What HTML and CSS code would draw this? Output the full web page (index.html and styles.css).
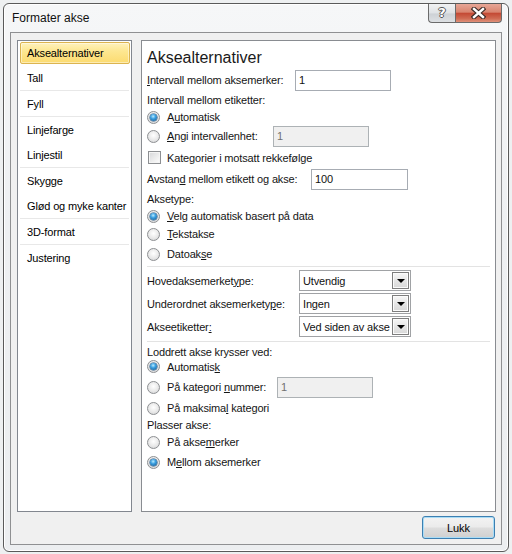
FILE: index.html
```html
<!DOCTYPE html>
<html lang="no">
<head>
<meta charset="utf-8">
<title>Formater akse</title>
<link rel="stylesheet" href="styles.css">
</head>
<body>
<div class="window">
  <div class="titlebar">
    <span class="title">Formater akse</span>
    <div class="caption-btns">
      <div class="cbtn help"><span>?</span></div>
      <div class="cbtn close">
        <svg width="15" height="12" viewBox="0 0 15 12"><path d="M3 2 L12 10 M12 2 L3 10" stroke="#3b2a26" stroke-width="4.6" stroke-linecap="square"/><path d="M3 2 L12 10 M12 2 L3 10" stroke="#ffffff" stroke-width="2.4" stroke-linecap="square"/></svg>
      </div>
    </div>
  </div>
  <div class="client">
    <div class="panes">
      <div class="nav">
        <div class="item first"><span class="sel">Aksealternativer</span></div>
        <div class="item">Tall</div>
        <div class="sep"></div>
        <div class="item">Fyll</div>
        <div class="sep"></div>
        <div class="item">Linjefarge</div>
        <div class="item">Linjestil</div>
        <div class="sep"></div>
        <div class="item">Skygge</div>
        <div class="item">Glød og myke kanter</div>
        <div class="sep"></div>
        <div class="item">3D-format</div>
        <div class="sep"></div>
        <div class="item">Justering</div>
      </div>
      <div class="content">
        <div class="heading">Aksealternativer</div>
        <div class="row r22"><span class="lbl w148"><u>I</u>ntervall mellom aksemerker:</span><span class="tb w96">1</span></div>
        <div class="row r18"><span>Intervall mellom etiketter:</span></div>
        <div class="row r16"><span class="radio on"></span><span>A<u>u</u>tomatisk</span></div>
        <div class="row r22"><span class="radio"></span><span class="lbl w106"><u>A</u>ngi intervallenhet:</span><span class="tb w96 dis">1</span></div>
        <div class="row r21"><span class="check"></span><span>Kategorier i motsatt rekkefølge</span></div>
        <div class="row r22"><span class="lbl w164">Avstan<u>d</u> mellom etikett og akse:</span><span class="tb w97">100</span></div>
        <div class="row r18"><span>Aksetype:</span></div>
        <div class="row r16"><span class="radio on"></span><span><u>V</u>elg automatisk basert på data</span></div>
        <div class="row r20"><span class="radio"></span><span><u>T</u>ekstakse</span></div>
        <div class="row r20"><span class="radio"></span><span>Datoak<u>s</u>e</span></div>
        <div class="hsep s1"></div>
        <div class="combos">
          <span>Hovedaksemerket<u>y</u>pe:</span>
          <span class="combo"><span class="val">Utvendig</span><span class="dd"></span></span>
          <span>Underordnet aksemerkety<u>p</u>e:</span>
          <span class="combo"><span class="val">Ingen</span><span class="dd"></span></span>
          <span>Akseetiketter<u>:</u></span>
          <span class="combo"><span class="val">Ved siden av akse</span><span class="dd"></span></span>
        </div>
        <div class="hsep s2"></div>
        <div class="row r15"><span>Loddrett akse krysser ved:</span></div>
        <div class="row r15"><span class="radio on"></span><span>Automatis<u>k</u></span></div>
        <div class="row r26"><span class="radio"></span><span class="lbl w110">På kategori <u>n</u>ummer:</span><span class="tb w96 dis">1</span></div>
        <div class="row r16"><span class="radio"></span><span>På maksima<u>l</u> kategori</span></div>
        <div class="row r18"><span>Plasser akse:</span></div>
        <div class="row r16"><span class="radio"></span><span>På akse<u>m</u>erker</span></div>
        <div class="row r24"><span class="radio on"></span><span>M<u>e</u>llom aksemerker</span></div>
      </div>
    </div>
    <div class="footer"><button class="btn">Lukk</button></div>
  </div>
</div>
</body>
</html>
```

FILE: styles.css
```css
html, body {
  margin: 0;
  padding: 0;
}
body {
  width: 512px;
  height: 554px;
  overflow: hidden;
  background: #eef0f1;
  font-family: "Liberation Sans", Arial, sans-serif;
  font-size: 11px;
  letter-spacing: -0.15px;
  color: #151515;
}
.window {
  box-sizing: border-box;
  margin: 3px 3px 0 3px;
  width: 506px;
  height: 549px;
  border: 1px solid #5a5a5a;
  border-radius: 6px;
  background: linear-gradient(to bottom, #f6f7f8 0%, #eef0f2 40%, #eceef0 100%);
  box-shadow: inset 0 0 0 1px #ffffff;
  padding: 0 6px 6px 6px;
  display: flex;
  flex-direction: column;
}
.titlebar {
  height: 28px;
  display: flex;
  justify-content: space-between;
  align-items: flex-start;
  flex: none;
}
.title {
  font-size: 12px;
  letter-spacing: 0;
  color: #111;
  padding-top: 7px;
  padding-left: 2px;
}
.caption-btns {
  display: flex;
}
.cbtn {
  box-sizing: border-box;
  height: 19px;
  border: 1px solid #6b6b6b;
  border-top: none;
  display: flex;
  align-items: center;
  justify-content: center;
}
.help {
  width: 27px;
  border-radius: 0 0 0 4px;
  border-right: none;
  background: linear-gradient(to bottom, #f1f2f3 0%, #dfe2e5 50%, #cdd1d5 55%, #dde0e3 100%);
}
.help span {
  font-family: "DejaVu Sans", sans-serif;
  font-weight: bold;
  font-size: 13px;
  color: #ffffff;
  text-shadow: 1px 0 0 #555, -1px 0 0 #555, 0 1px 0 #555, 0 -1px 0 #555;
  margin-top: -1px;
}
.close {
  width: 47px;
  border-radius: 0 0 4px 0;
  background: linear-gradient(to bottom, #e7a696 0%, #d98570 45%, #c44a35 52%, #cf6a52 80%, #e0917a 100%);
}
.client {
  flex: 1;
  box-sizing: border-box;
  border: 1px solid #8f9092;
  background: #f0f0f0;
  padding: 7px 5px 5px 6px;
  display: flex;
  flex-direction: column;
}
.panes {
  height: 472px;
  display: flex;
  gap: 9px;
}
.nav {
  box-sizing: border-box;
  width: 115px;
  height: 472px;
  border: 1px solid #82878f;
  background: #ffffff;
  padding: 0 1px;
  color: #000;
}
.item {
  height: 25px;
  display: flex;
  align-items: center;
  padding-left: 8px;
  white-space: nowrap;
}
.item.first {
  height: 24px;
  padding-left: 1px;
  align-items: flex-start;
}
.sel {
  box-sizing: border-box;
  margin-top: 1px;
  width: 111px;
  height: 22px;
  display: flex;
  align-items: center;
  padding-left: 6px;
  border: 1px solid #dcb44f;
  border-radius: 2px;
  background: linear-gradient(to bottom, #fff2bd 0%, #fde791 40%, #fcdb70 100%);
  box-shadow: inset 0 0 0 1px rgba(255, 255, 255, 0.45);
}
.sep {
  height: 1px;
  margin: 0 1px;
  background: #e8e8e8;
}
.content {
  box-sizing: border-box;
  width: 355px;
  height: 472px;
  border: 1px solid #898c91;
  background: #ffffff;
  padding: 6px 5px 0 5px;
}
.heading {
  height: 22px;
  font-size: 16px;
  letter-spacing: 0;
  line-height: 22px;
  color: #1a1a1a;
}
.row {
  display: flex;
  align-items: center;
  white-space: nowrap;
}
.r15 { height: 15px; }
.r16 { height: 16px; }
.r18 { height: 18px; }
.r20 { height: 20px; }
.r21 { height: 21px; }
.r22 { height: 22px; }
.r24 { height: 24px; }
.r26 { height: 26px; }
.lbl { flex: none; }
.w148 { width: 148px; }
.w106 { width: 106px; }
.w164 { width: 164px; }
.w110 { width: 110px; }
.tb {
  box-sizing: border-box;
  height: 21px;
  border: 1px solid #a7acb3;
  background: #ffffff;
  padding-left: 3px;
  display: flex;
  align-items: center;
  color: #111;
}
.tb.w96 { width: 96px; }
.tb.w97 { width: 97px; }
.tb.dis {
  background: #f0f0f0;
  border-color: #adb2b5;
  color: #707070;
}
.radio {
  box-sizing: border-box;
  flex: none;
  width: 13px;
  height: 13px;
  margin-right: 7px;
  border-radius: 50%;
  border: 1px solid #8d8f92;
  background: radial-gradient(circle at 50% 40%, #ffffff 0%, #ebebeb 50%, #cfd0d2 100%);
  display: flex;
  align-items: center;
  justify-content: center;
}
.radio.on::after {
  content: "";
  width: 7px;
  height: 7px;
  border-radius: 50%;
  background: radial-gradient(circle at 45% 35%, #b8ecff 0%, #3a9ee0 40%, #155488 100%);
  box-shadow: 0 0 0 0.5px #1e4d77;
}
.check {
  box-sizing: border-box;
  flex: none;
  width: 13px;
  height: 13px;
  margin-left: 1px;
  margin-right: 6px;
  border: 1px solid #8d8f92;
  background: linear-gradient(135deg, #d6d7d9 0%, #f2f2f2 70%, #ffffff 100%);
  box-shadow: inset 0 0 0 1px #f4f4f4;
}
.hsep {
  height: 1px;
  background: #e3e3e3;
}
.s1 { margin-top: 2px; margin-bottom: 3px; }
.s2 { margin-top: 2px; margin-bottom: 2px; }
.combos {
  display: grid;
  grid-template-columns: 152px 112px;
  grid-auto-rows: 21px;
  row-gap: 2px;
  align-items: center;
  padding-bottom: 2px;
  white-space: nowrap;
}
.combo {
  box-sizing: border-box;
  height: 21px;
  border: 1px solid #a0a2a5;
  background: #ffffff;
  display: flex;
  align-items: center;
  padding-left: 3px;
  color: #111;
}
.val {
  flex: 1;
  white-space: nowrap;
  overflow: hidden;
}
.dd {
  box-sizing: border-box;
  flex: none;
  width: 17px;
  height: 17px;
  margin-right: 1px;
  border: 1px solid #7e7e7e;
  background: linear-gradient(to bottom, #f7f7f7 0%, #e6e6e6 50%, #d8d8d8 100%);
  box-shadow: inset 0 0 0 1px #fbfbfb;
  display: flex;
  align-items: center;
  justify-content: center;
}
.dd::after {
  content: "";
  width: 0;
  height: 0;
  border-left: 4px solid transparent;
  border-right: 4px solid transparent;
  border-top: 4px solid #000;
  margin-top: 1px;
}
.footer {
  display: flex;
  justify-content: flex-end;
  padding-top: 4px;
  padding-right: 1px;
}
.btn {
  box-sizing: border-box;
  width: 73px;
  height: 23px;
  font-family: "Liberation Sans", Arial, sans-serif;
  font-size: 11px;
  color: #000;
  border: 1px solid #3c7fb1;
  border-radius: 3px;
  background: linear-gradient(to bottom, #f3f3f3 0%, #ebebeb 48%, #dddddd 52%, #d0d0d0 100%);
  box-shadow: inset 0 0 0 1px #a9dcf6;
  padding: 0;
}
```
